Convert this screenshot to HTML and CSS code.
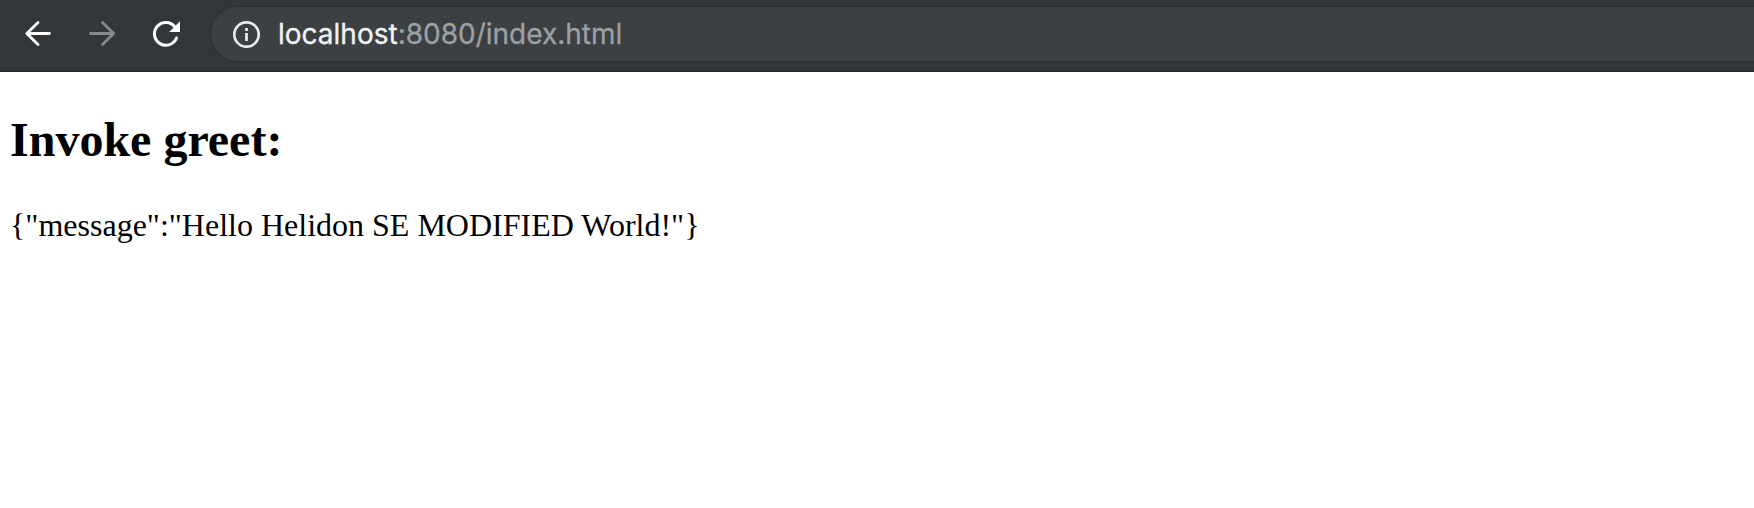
FILE: index.html
```html
<!DOCTYPE html>
<html lang="en">
<head>
<meta charset="utf-8">
<title>localhost:8080/index.html</title>
<link rel="stylesheet" href="styles.css">
</head>
<body>
<header class="toolbar">
  <nav class="nav">
    <svg class="icon" viewBox="0 0 32 32"><path class="arrow" d="M27.5 15.5H5M16 4.5L4.8 15.5L16 26.5"/></svg>
    <svg class="icon dim" viewBox="0 0 32 32"><path class="arrow" d="M4.5 15.5H27M16.5 4.5L27.7 15.5L16.5 26.5"/></svg>
    <svg class="icon" viewBox="0 0 32 32"><path class="loop" d="M26.5 20A11.4 11.4 0 1 1 24.8 8.8"/><path class="tip" d="M30 3.2V14H19.2Z"/></svg>
  </nav>
  <div class="omnibox">
    <svg class="info" viewBox="0 0 28 28"><circle cx="14.5" cy="14.5" r="12.2"/><path d="M14.5 13V21M14.5 8V11"/></svg>
    <span class="url"><span class="host">localhost</span><span class="path">:8080/index.html</span></span>
  </div>
</header>
<main class="page">
  <h2 class="title">Invoke greet:</h2>
  <div class="message">{"message":"Hello Helidon SE MODIFIED World!"}</div>
</main>
</body>
</html>
```
FILE: styles.css
```css
body {
  margin: 0;
  background: #fff;
  color: #000;
  font-family: "Liberation Serif", serif;
}
.toolbar {
  box-sizing: border-box;
  height: 72px;
  display: flex;
  padding: 6px 0 9px 22px;
  background: #323639;
  border-bottom: 1px solid #222428;
  overflow: hidden;
}
.nav {
  display: flex;
  align-items: center;
  gap: 32px;
  flex: none;
  margin-right: 28px;
}
.icon {
  width: 32px;
  height: 32px;
  fill: none;
  stroke: #fff;
  stroke-width: 2.8;
}
.dim { stroke: #87898b; }
.arrow { stroke-linecap: round; stroke-linejoin: round; }
.loop { stroke-linecap: round; stroke-width: 3; }
.tip { fill: #fff; stroke: none; }
.omnibox {
  box-sizing: border-box;
  flex: 1;
  height: 56px;
  display: flex;
  align-items: center;
  padding-left: 21px;
  background: #3c4043;
  border: 1px solid #2c3033;
  border-right: 0;
  border-radius: 28px 0 0 28px;
}
.info {
  width: 28px;
  height: 28px;
  margin-right: 18px;
  fill: none;
  stroke: #e8eaed;
  stroke-width: 2.7;
}
.url {
  font: 400 28px/32px Inter, sans-serif;
  -webkit-text-stroke: 0.3px currentColor;
  white-space: nowrap;
}
.host { color: #f1f3f4; }
.path { color: #9aa0a3; }
.page { padding: 40px 10px 0; }
.title {
  margin: 0 0 39px;
  font-size: 48px;
  line-height: 56px;
}
.message {
  font-size: 32px;
  line-height: 36px;
}
```
